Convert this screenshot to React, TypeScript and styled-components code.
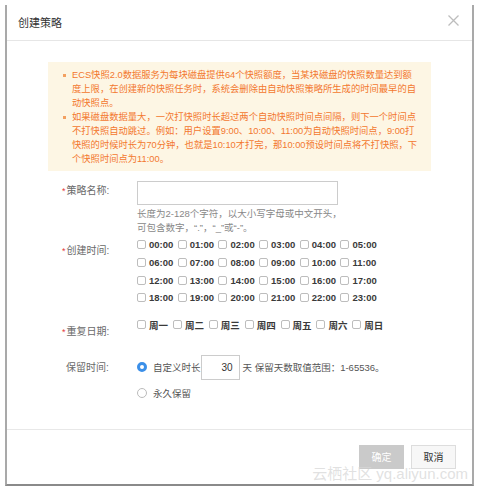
import React from "react";
import styled, { createGlobalStyle } from "styled-components";

const GlobalStyle = createGlobalStyle`
  body {
    margin: 0;
    background: #ffffff;
    font-family: "Liberation Sans", "Noto Sans CJK SC", sans-serif;
  }
`;

const hours = Array.from({ length: 24 }, (_, i) => `${String(i).padStart(2, "0")}:00`);
const days = ["周一", "周二", "周三", "周四", "周五", "周六", "周日"];

const tips = [
  [
    "ECS快照2.0数据服务为每块磁盘提供64个快照额度，当某块磁盘的快照数量达到额",
    "度上限，在创建新的快照任务时，系统会删除由自动快照策略所生成的时间最早的自",
    "动快照点。",
  ],
  [
    "如果磁盘数据量大，一次打快照时长超过两个自动快照时间点间隔，则下一个时间点",
    "不打快照自动跳过。例如：用户设置9:00、10:00、11:00为自动快照时间点，9:00打",
    "快照的时候时长为70分钟，也就是10:10才打完，那10:00预设时间点将不打快照，下",
    "个快照时间点为11:00。",
  ],
];

export default function App() {
  return (
    <>
      <GlobalStyle />
      <Page>
        <Dialog>
          <Header>
            <Title>创建策略</Title>
            <Close aria-label="close">
              <svg width="11" height="11" viewBox="0 0 11 11">
                <path d="M0.5 0.5 L10.5 10.5 M10.5 0.5 L0.5 10.5" stroke="#bdbdbd" strokeWidth="1.3" />
              </svg>
            </Close>
          </Header>

          <Body>
            <Alert>
              {tips.map((lines, i) => (
                <Tip key={i}>
                  <Bullet />
                  <TipText>
                    {lines.map((l, j) => (
                      <TipLine key={j}>{l}</TipLine>
                    ))}
                  </TipText>
                </Tip>
              ))}
            </Alert>

            <Form>
              <FormRow $gap={10}>
                <Label $offset={3}>
                  <Req>*</Req>策略名称:
                </Label>
                <div>
                  <NameInput />
                  <Help>
                    长度为2-128个字符，以大小写字母或中文开头，
                    <br />
                    可包含数字，“.”，“_”或“-”。
                  </Help>
                </div>
              </FormRow>

              <FormRow $gap={1}>
                <Label $offset={8}>
                  <Req>*</Req>创建时间:
                </Label>
                <HourGrid>
                  {hours.map((h) => (
                    <Check key={h}>
                      <Box type="checkbox" />
                      {h}
                    </Check>
                  ))}
                </HourGrid>
              </FormRow>

              <FormRow $gap={9}>
                <Label $offset={9}>
                  <Req>*</Req>重复日期:
                </Label>
                <DayGrid>
                  {days.map((d) => (
                    <Check key={d}>
                      <Box type="checkbox" />
                      {d}
                    </Check>
                  ))}
                </DayGrid>
              </FormRow>

              <FormRow $gap={16}>
                <Label $offset={6}>保留时间:</Label>
                <Retention>
                  <RadioLine $height={25}>
                    <Radio $checked />
                    <RadioText>自定义时长</RadioText>
                    <DaysInput defaultValue="30" />
                    <Note>天 保留天数取值范围：1-65536。</Note>
                  </RadioLine>
                  <RadioLine $height={14}>
                    <Radio />
                    <RadioText>永久保留</RadioText>
                  </RadioLine>
                </Retention>
              </FormRow>
            </Form>
          </Body>

          <Footer>
            <Button $primary>确定</Button>
            <Button>取消</Button>
          </Footer>

          <Watermark>云栖社区 yq.aliyun.com</Watermark>
        </Dialog>
      </Page>
    </>
  );
}

const Page = styled.div`
  padding: 5px 0 0 5px;
  width: 478px;
  height: 490px;
  box-sizing: border-box;
`;

const Dialog = styled.div`
  position: relative;
  width: 469px;
  box-sizing: border-box;
  border: 2px solid #a9a9a9;
  border-top: none;
  border-bottom-color: #8a8a8a;
  background: #ffffff;
`;

const Header = styled.div`
  height: 36px;
  display: flex;
  align-items: center;
  justify-content: space-between;
  padding: 0 13px 2px 11px;
  box-sizing: border-box;
  border-bottom: 1px solid #e6e6e6;
`;

const Title = styled.div`
  font-size: 11px;
  color: #333333;
`;

const Close = styled.div`
  display: flex;
  margin-top: -2px;
`;

const Body = styled.div`
  padding: 21px 0 29px;
`;

const Alert = styled.div`
  margin: 0 41px;
  padding: 6px 6px 5px 15px;
  background: #fdf6e4;
  color: #f3782f;
  font-size: 9.3px;
  line-height: 14px;
`;

const Tip = styled.div`
  display: flex;
`;

const Bullet = styled.span`
  width: 3px;
  height: 3px;
  margin: 6px 6px 0 0;
  background: #f3a060;
  flex-shrink: 0;
`;

const TipText = styled.div`
  white-space: nowrap;
`;

const TipLine = styled.div``;

const Form = styled.div`
  padding-left: 59px;
`;

const FormRow = styled.div<{ $gap: number }>`
  display: grid;
  grid-template-columns: 71px 1fr;
  margin-top: ${(p) => p.$gap}px;
`;

const Label = styled.div<{ $offset: number }>`
  padding-top: ${(p) => p.$offset}px;
  font-size: 10px;
  line-height: 14px;
  color: #6a6a6a;
  white-space: nowrap;
`;

const Req = styled.span`
  color: #e4393c;
  font-size: 9px;
  margin-left: -4px;
  margin-right: 1px;
`;

const NameInput = styled.input`
  display: block;
  width: 201px;
  height: 24px;
  box-sizing: border-box;
  border: 1px solid #cccccc;
  outline: none;
`;

const Help = styled.div`
  margin-top: 2px;
  font-size: 9.5px;
  line-height: 14px;
  color: #888888;
`;

const HourGrid = styled.div`
  display: grid;
  grid-template-columns: repeat(6, 40.7px);
  grid-auto-rows: 17.7px;
`;

const DayGrid = styled.div`
  display: grid;
  grid-template-columns: repeat(7, 35.9px);
  grid-auto-rows: 18px;
`;

const Check = styled.label`
  display: flex;
  align-items: center;
  gap: 3px;
  font-size: 9.5px;
  font-weight: bold;
  color: #3a3a3a;
  white-space: nowrap;
`;

const Box = styled.input`
  appearance: none;
  margin: 0;
  width: 9px;
  height: 9px;
  border: 1px solid #bdbdbd;
  border-radius: 2px;
  background: #ffffff;
  box-sizing: border-box;
  flex-shrink: 0;
`;

const Retention = styled.div`
  display: flex;
  flex-direction: column;
  gap: 6px;
`;

const RadioLine = styled.div<{ $height: number }>`
  display: flex;
  align-items: center;
  height: ${(p) => p.$height}px;
  font-size: 9.5px;
  color: #555555;
  white-space: nowrap;
`;

const Radio = styled.span<{ $checked?: boolean }>`
  width: 10px;
  height: 10px;
  border-radius: 50%;
  box-sizing: border-box;
  flex-shrink: 0;
  margin-right: 6px;
  border: ${(p) => (p.$checked ? "3px solid #3b8fe8" : "1px solid #bbbbbb")};
  background: #ffffff;
`;

const RadioText = styled.span``;

const DaysInput = styled.input`
  width: 39px;
  height: 25px;
  box-sizing: border-box;
  border: 1px solid #cccccc;
  padding: 0 6px 0 0;
  text-align: right;
  font-size: 10px;
  font-family: inherit;
  color: #333333;
  outline: none;
`;

const Note = styled.span`
  margin-left: 3px;
`;

const Footer = styled.div`
  display: flex;
  justify-content: flex-end;
  gap: 7px;
  padding: 15px 16px 15px 0;
  border-top: 1px solid #e8e8e8;
`;

const Button = styled.button<{ $primary?: boolean }>`
  width: 45px;
  height: 24px;
  padding: 0;
  font-family: inherit;
  font-size: 10px;
  border: 1px solid ${(p) => (p.$primary ? "#cacaca" : "#dddddd")};
  background: ${(p) => (p.$primary ? "#cacaca" : "#f7f7f7")};
  color: ${(p) => (p.$primary ? "#ffffff" : "#333333")};
`;

const Watermark = styled.div`
  position: absolute;
  right: 4px;
  bottom: 1px;
  font-size: 15px;
  color: rgba(215, 215, 215, 0.75);
  white-space: nowrap;
  pointer-events: none;
`;
